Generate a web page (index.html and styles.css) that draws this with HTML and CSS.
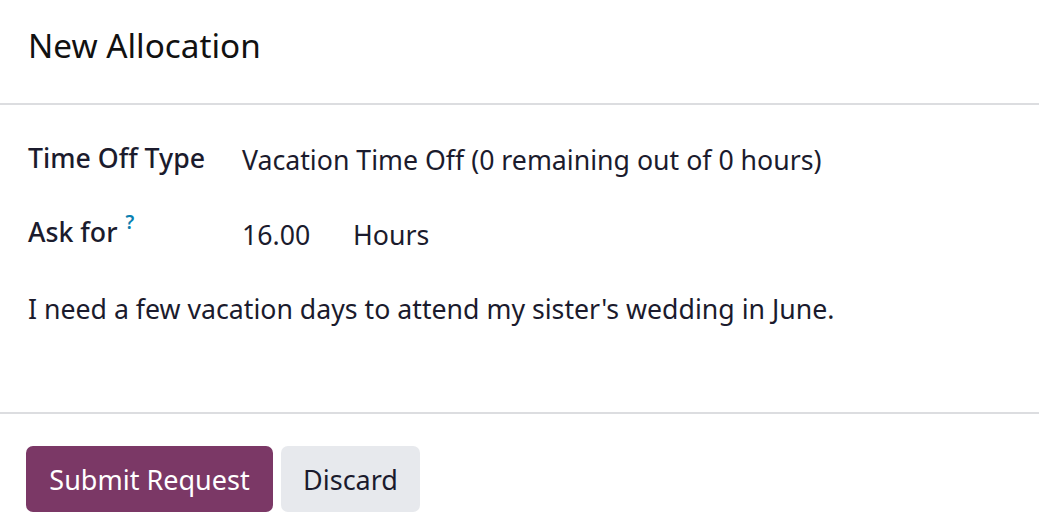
FILE: index.html
```html
<!DOCTYPE html>
<html lang="en">
<head>
<meta charset="utf-8">
<title>New Allocation</title>
<link rel="stylesheet" href="styles.css">
</head>
<body>
<div class="modal">
  <header class="modal-header">
    <h1 class="modal-title">New Allocation</h1>
  </header>
  <main class="modal-body">
    <div class="field-row">
      <div class="label">Time Off Type</div>
      <div class="value value-type">Vacation Time Off (0 remaining out of 0 hours)</div>
    </div>
    <div class="field-row">
      <div class="label">Ask for <sup class="help">?</sup></div>
      <div class="value value-ask"><span class="qty">16.00</span><span class="unit">Hours</span></div>
    </div>
    <p class="note">I need a few vacation days to attend my sister's wedding in June.</p>
  </main>
  <footer class="modal-footer">
    <button class="btn btn-primary">Submit Request</button>
    <button class="btn btn-secondary">Discard</button>
  </footer>
</div>
</body>
</html>
```

FILE: styles.css
```css
* { box-sizing: border-box; }
html, body { margin: 0; padding: 0; background: #ffffff; }
body {
  font-family: "Noto Sans", "Open Sans", sans-serif;
  color: #1b1b2d;
  width: 1039px;
  height: 531px;
  overflow: hidden;
}
.modal { display: flex; flex-direction: column; }
.modal-header {
  height: 105px;
  padding: 24px 28px 0;
  border-bottom: 2px solid #dcdde0;
}
.modal-title {
  margin: 0;
  font-size: 33.3px;
  font-weight: 400;
  line-height: 42px;
  color: #111111;
}
.modal-body {
  height: 307px;
  padding: 36px 28px 0;
}
.field-row {
  display: grid;
  grid-template-columns: 214px 1fr;
  height: 74px;
}
.label {
  font-size: 26.7px;
  font-weight: 500;
  line-height: 34px;
}
.value {
  font-size: 26.7px;
  line-height: 34px;
  padding-top: 2px;
}
.help {
  font-size: 19px;
  font-weight: 600;
  color: #0a7fb0;
  vertical-align: 13px;
  line-height: 0;
  margin-left: 1px;
}
.value-ask { display: flex; padding-top: 3px; }
.qty { width: 111px; }
.note {
  margin: 3px 0 0;
  font-size: 26.7px;
  line-height: 34px;
}
.modal-footer {
  border-top: 2px solid #dcdde0;
  padding: 32px 26px 0;
  display: flex;
  gap: 8px;
}
.btn {
  height: 66px;
  border: none;
  border-radius: 7px;
  font-family: inherit;
  font-size: 27px;
  padding: 0;
  line-height: 1;
}
.btn-primary { background: #7b3866; color: #ffffff; width: 247px; }
.btn-secondary { background: #e7e9ed; color: #1b1b2d; width: 139px; }
```
